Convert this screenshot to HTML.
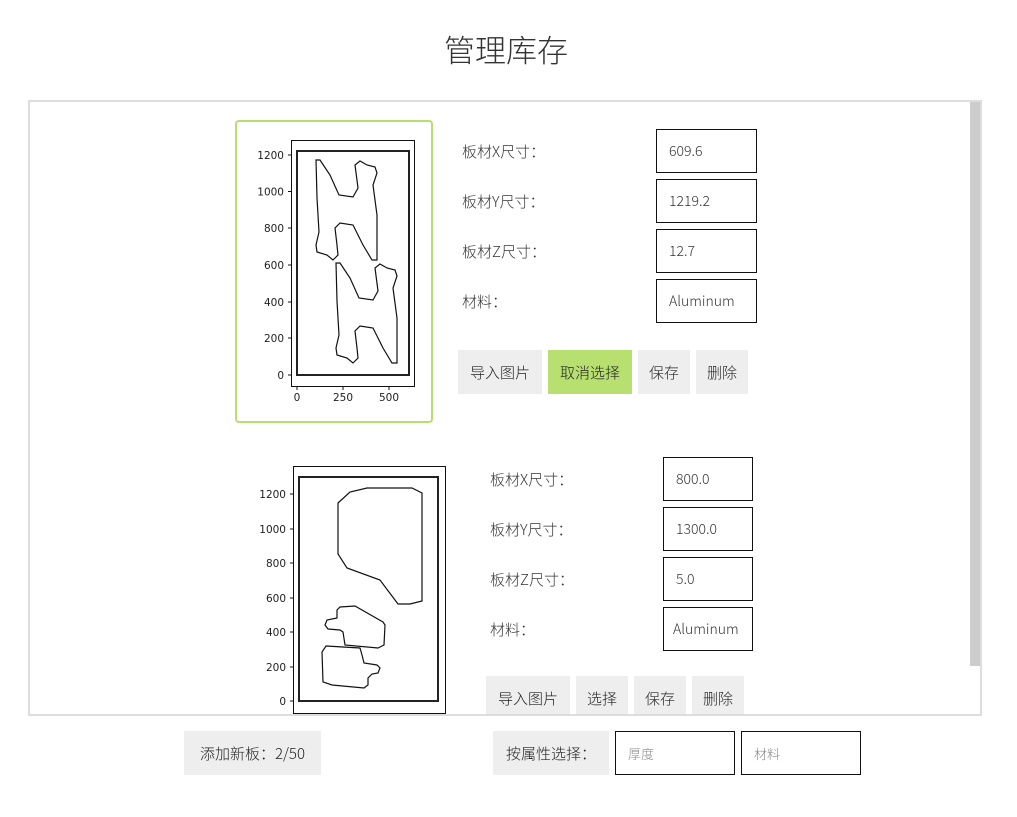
<!DOCTYPE html>
<html><head><meta charset="utf-8">
<style>
*{margin:0;padding:0;box-sizing:border-box}
body{width:1017px;height:817px;background:#fff;font-family:"Liberation Sans","Noto Sans CJK SC",sans-serif;color:#333;position:relative;overflow:hidden}
.a{position:absolute}
.title{left:0;width:1012px;top:26px;text-align:center;font-size:31px;font-weight:300;color:#333;font-family:"Noto Sans CJK SC",sans-serif}
.box{left:28px;top:100px;width:954px;height:616px;border:2px solid #ddd;overflow:hidden}
.sb{left:940px;top:0;width:10px;height:564px;background:#ccc}
.lbl{font-size:15px;font-family:"Noto Sans CJK SC",sans-serif;font-weight:300;line-height:20px}
.inp{border:1px solid #111;background:#fff;font-size:14px;padding-left:12px;display:flex;align-items:center;font-family:"Noto Sans CJK SC","Liberation Sans",sans-serif;font-weight:300}
.btn{background:#eee;font-size:15px;display:flex;align-items:center;justify-content:center;font-family:"Noto Sans CJK SC",sans-serif;font-weight:300;color:#222}
.g{background:#b8e070}
svg text{font-family:"DejaVu Sans",sans-serif;font-size:10.5px;fill:#222}
</style></head><body>
<div class="a title">管理库存</div>
<div class="a box">
 <div class="a sb"></div>
 <div class="a" style="left:205px;top:18px;width:198px;height:303px;border:2px solid #b5df73;border-radius:4px"></div>
</div>
<svg class="a" style="left:0;top:0" width="1017" height="714" viewBox="0 0 1017 714">
 <defs><clipPath id="c"><rect x="30" y="102" width="950" height="612"/></clipPath></defs>
 <g clip-path="url(#c)">
 <rect x="291.5" y="140.5" width="123" height="246" fill="none" stroke="#111" stroke-width="1"/>
 <rect x="297" y="151" width="112" height="224" fill="none" stroke="#222" stroke-width="2"/>
 <g id="h" fill="none" stroke="#111" stroke-width="1.2">
 <path d="M316,160 L320,160 L330,175 L339,195 L353,197 L358,188 L355,165 L360,161 L367,165 L375,167 L377,173 L373,185 L377,215 L377,260 L372,260 L363,245 L358,235 L353,225 L340,223 L335,228 L337,245 L338,255 L333,260 L327,255 L317,252 L316,245 L319,232 L317,198 Z"/>
 </g>
 <use href="#h" transform="translate(20,103)"/>
 <g stroke="#111" stroke-width="1">
 <line x1="288" y1="155" x2="291" y2="155"/><line x1="288" y1="191.5" x2="291" y2="191.5"/><line x1="288" y1="228" x2="291" y2="228"/><line x1="288" y1="265" x2="291" y2="265"/><line x1="288" y1="302" x2="291" y2="302"/><line x1="288" y1="338" x2="291" y2="338"/><line x1="288" y1="375" x2="291" y2="375"/>
 <line x1="297" y1="387" x2="297" y2="390"/><line x1="343" y1="387" x2="343" y2="390"/><line x1="389" y1="387" x2="389" y2="390"/>
 </g>
 <g text-anchor="end">
 <text x="284" y="159">1200</text><text x="284" y="195.5">1000</text><text x="284" y="232">800</text><text x="284" y="269">600</text><text x="284" y="306">400</text><text x="284" y="342">200</text><text x="284" y="379">0</text>
 </g>
 <g text-anchor="middle"><text x="297" y="401">0</text><text x="343" y="401">250</text><text x="389" y="401">500</text></g>

 <rect x="293.5" y="466.5" width="152" height="247" fill="none" stroke="#111" stroke-width="1"/>
 <rect x="299" y="477" width="139" height="224" fill="none" stroke="#222" stroke-width="2"/>
 <g fill="none" stroke="#111" stroke-width="1.2">
 <path d="M338,503 L350,492 L367,488 L412,488 L422,493 L422,601 L410,604 L398,604 L380,580 L347,568 L338,554 Z"/>
 <path d="M340,607 L355,606 L383,622 L385,625 L384,645 L378,648 L345,645 L343,632 L340,630 L328,629 L325,625 L327,620 L337,618 L337,610 Z"/>
 <path d="M326,646 L360,648 L362,655 L364,663 L377,665 L380,668 L378,673 L372,674 L368,678 L368,685 L364,688 L332,685 L323,682 L322,652 Z"/>
 </g>
 <g stroke="#111" stroke-width="1">
 <line x1="290" y1="494" x2="293" y2="494"/><line x1="290" y1="529" x2="293" y2="529"/><line x1="290" y1="563" x2="293" y2="563"/><line x1="290" y1="598" x2="293" y2="598"/><line x1="290" y1="632" x2="293" y2="632"/><line x1="290" y1="667" x2="293" y2="667"/><line x1="290" y1="701" x2="293" y2="701"/>
 <line x1="299" y1="713" x2="299" y2="716"/><line x1="343" y1="713" x2="343" y2="716"/><line x1="386" y1="713" x2="386" y2="716"/><line x1="429" y1="713" x2="429" y2="716"/>
 </g>
 <g text-anchor="end">
 <text x="286" y="498">1200</text><text x="286" y="533">1000</text><text x="286" y="567">800</text><text x="286" y="602">600</text><text x="286" y="636">400</text><text x="286" y="671">200</text><text x="286" y="705">0</text>
 </g>
 </g>
</svg>

<div class="a lbl" style="left:462px;top:142px">板材X尺寸：</div>
<div class="a lbl" style="left:462px;top:192px">板材Y尺寸：</div>
<div class="a lbl" style="left:462px;top:242px">板材Z尺寸：</div>
<div class="a lbl" style="left:462px;top:292px">材料：</div>
<div class="a inp" style="left:656px;top:129px;width:101px;height:44px">609.6</div>
<div class="a inp" style="left:656px;top:179px;width:101px;height:44px">1219.2</div>
<div class="a inp" style="left:656px;top:229px;width:101px;height:44px">12.7</div>
<div class="a inp" style="left:656px;top:279px;width:101px;height:44px">Aluminum</div>
<div class="a btn" style="left:458px;top:350px;width:84px;height:44px">导入图片</div>
<div class="a btn g" style="left:548px;top:350px;width:84px;height:44px">取消选择</div>
<div class="a btn" style="left:638px;top:350px;width:52px;height:44px">保存</div>
<div class="a btn" style="left:696px;top:350px;width:52px;height:44px">删除</div>

<div class="a lbl" style="left:490px;top:470px">板材X尺寸：</div>
<div class="a lbl" style="left:490px;top:520px">板材Y尺寸：</div>
<div class="a lbl" style="left:490px;top:570px">板材Z尺寸：</div>
<div class="a lbl" style="left:490px;top:620px">材料：</div>
<div class="a inp" style="left:663px;top:457px;width:90px;height:44px">800.0</div>
<div class="a inp" style="left:663px;top:507px;width:90px;height:44px">1300.0</div>
<div class="a inp" style="left:663px;top:557px;width:90px;height:44px">5.0</div>
<div class="a inp" style="left:663px;top:607px;width:90px;height:44px;padding-left:9px">Aluminum</div>
<div class="a" style="left:30px;top:676px;width:950px;height:38px;overflow:hidden">
 <div class="a btn" style="left:456px;top:0;width:84px;height:44px">导入图片</div>
 <div class="a btn" style="left:546px;top:0;width:52px;height:44px">选择</div>
 <div class="a btn" style="left:604px;top:0;width:52px;height:44px">保存</div>
 <div class="a btn" style="left:662px;top:0;width:52px;height:44px">删除</div>
</div>

<div class="a btn" style="left:184px;top:731px;width:137px;height:44px">添加新板：2/50</div>
<div class="a btn" style="left:493px;top:731px;width:116px;height:44px">按属性选择：</div>
<div class="a inp" style="left:615px;top:731px;width:120px;height:44px;color:#888;font-size:13px">厚度</div>
<div class="a inp" style="left:741px;top:731px;width:120px;height:44px;color:#888;font-size:13px">材料</div>
</body></html>
